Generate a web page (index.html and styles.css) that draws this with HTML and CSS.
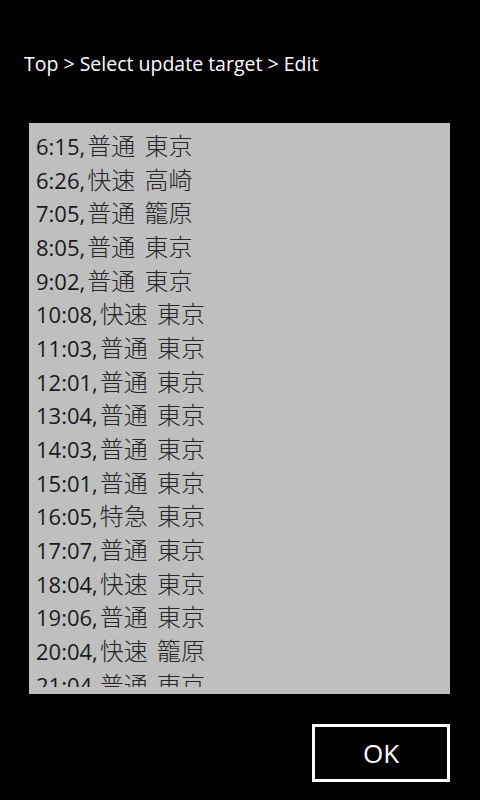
FILE: index.html
```html
<!DOCTYPE html>
<html lang="ja">
<head>
<meta charset="utf-8">
<link rel="stylesheet" href="styles.css">
</head>
<body>
<div class="page">
  <div class="crumb">Top &gt; Select update target &gt; Edit</div>
  <div class="box">
    <div class="lines">
      <div class="line">6:15,<span class="j">普通 東京</span></div>
      <div class="line">6:26,<span class="j">快速 高崎</span></div>
      <div class="line">7:05,<span class="j">普通 籠原</span></div>
      <div class="line">8:05,<span class="j">普通 東京</span></div>
      <div class="line">9:02,<span class="j">普通 東京</span></div>
      <div class="line">10:08,<span class="j">快速 東京</span></div>
      <div class="line">11:03,<span class="j">普通 東京</span></div>
      <div class="line">12:01,<span class="j">普通 東京</span></div>
      <div class="line">13:04,<span class="j">普通 東京</span></div>
      <div class="line">14:03,<span class="j">普通 東京</span></div>
      <div class="line">15:01,<span class="j">普通 東京</span></div>
      <div class="line">16:05,<span class="j">特急 東京</span></div>
      <div class="line">17:07,<span class="j">普通 東京</span></div>
      <div class="line">18:04,<span class="j">快速 東京</span></div>
      <div class="line">19:06,<span class="j">普通 東京</span></div>
      <div class="line">20:04,<span class="j">快速 籠原</span></div>
      <div class="line">21:04,<span class="j">普通 東京</span></div>
    </div>
  </div>
  <div class="actions">
    <div class="ok">OK</div>
  </div>
</div>
</body>
</html>
```
FILE: styles.css
```css
html, body {
  margin: 0;
  padding: 0;
  background: #000;
}
.page {
  width: 480px;
  height: 800px;
  display: flex;
  flex-direction: column;
  font-family: "Open Sans", "Noto Sans CJK JP", sans-serif;
  color: #fff;
}
.crumb {
  padding: 50px 0 0 24px;
  font-size: 19.5px;
  line-height: 28px;
  height: 28px;
}
.box {
  margin: 45px 0 0 29px;
  width: 421px;
  height: 571px;
  background: #bfbfbf;
  box-sizing: border-box;
  padding: 7px 0 7px 7px;
}
.lines {
  height: 100%;
  overflow: hidden;
  color: #1a1a1a;
  font-size: 22px;
  line-height: 33.67px;
}
.line {
  white-space: nowrap;
}
.j {
  font-family: "Noto Sans CJK JP", sans-serif;
  font-size: 24px;
  font-weight: 300;
  line-height: 24px;
  margin-left: 2px;
  word-spacing: 4px;
  color: #262626;
}
.actions {
  display: flex;
  justify-content: flex-end;
  padding: 30px 30px 0 0;
}
.ok {
  width: 138px;
  height: 58px;
  box-sizing: border-box;
  border: 3px solid #fff;
  display: flex;
  align-items: center;
  justify-content: center;
  font-size: 26px;
  font-weight: 400;
}
```
